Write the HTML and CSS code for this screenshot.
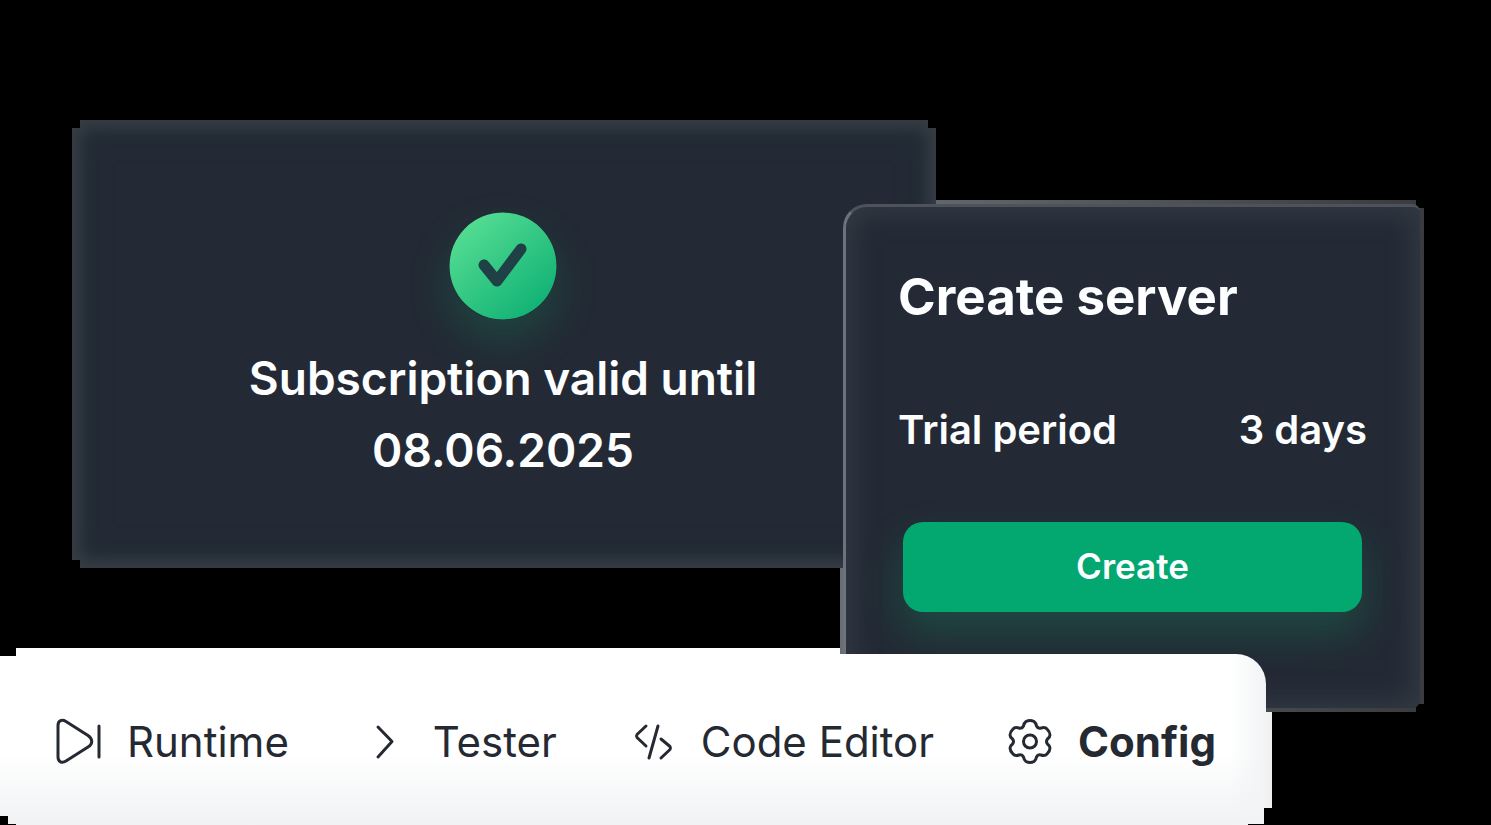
FILE: index.html
```
<!DOCTYPE html>
<html lang="en">
<head>
    <meta charset="UTF-8">
    <meta name="viewport" content="width=device-width, initial-scale=1.0">
    <title>Create server</title>
    <link rel="stylesheet" href="styles.css">
</head>
<body>
    <main class="collage">
        <section class="subscription">
            <svg class="check" viewBox="0 0 108 108" aria-hidden="true">
                <defs>
                    <linearGradient id="check-fill" x1="0.1" y1="0.1" x2="0.8" y2="0.9">
                        <stop offset="0" stop-color="#56de93"/>
                        <stop offset="1" stop-color="#13b376"/>
                    </linearGradient>
                </defs>
                <circle cx="54" cy="54" r="53.500" fill="url(#check-fill)"/>
                <path d="M35 53L48 69L72 37" fill="none" stroke="#1f4146" stroke-width="11" stroke-linecap="round" stroke-linejoin="round"/>
            </svg>
            <p>Subscription valid until<br>08.06.2025</p>
        </section>

        <section class="server">
            <h1>Create server</h1>
            <div class="trial">
                <span>Trial period</span>
                <span>3 days</span>
            </div>
            <button type="button" class="create-button">Create</button>
        </section>

        <nav class="tabs">
            <a href="#runtime">
                <svg class="icon" viewBox="0 0 48 48" aria-hidden="true">
                    <path d="M3 7.500C3 2.500 7 1 11 3.500L33 17.500C38 21 38 26 33 29L11 43C7 45.500 3 44 3 39Z"/>
                    <path d="M44 8V39"/>
                </svg>
                Runtime
            </a>
            <a href="#tester">
                <svg class="icon" viewBox="0 0 48 48" aria-hidden="true">
                    <path d="M17 9L31 23.500L17 39"/>
                </svg>
                Tester
            </a>
            <a href="#editor">
                <svg class="icon" viewBox="0 0 48 48" aria-hidden="true">
                    <path d="M17 8L8 16.500Q7 18 8 19.500L17 28"/>
                    <path d="M29 8L20 40"/>
                    <path d="M32 21L41 28.500Q42 30 41 31.500L32 40"/>
                </svg>
                Code Editor
            </a>
            <a href="#config" class="active">
                <svg class="icon" viewBox="0 0 48 48" aria-hidden="true">
                    <path d="M20 3.500Q24 1.500 28 3.500Q30 5 30.500 8Q32 11 35 10Q39 8.500 41 11Q44 14 44 17Q44 19 41.500 21Q39.500 23.500 41.500 26Q44 28 44 30Q44 33 41 36Q39 38.500 35 37Q32 36 30.500 39Q30 42 28 43.500Q24 45.500 20 43.500Q18 42 17.500 39Q16 36 13 37Q9 38.500 7 36Q4 33 4 30Q4 28 6.500 26Q8.500 23.500 6.500 21Q4 19 4 17Q4 14 7 11Q9 8.500 13 10Q16 11 17.500 8Q18 5 20 3.500Z"/>
                    <circle cx="24" cy="23.500" r="6.500"/>
                </svg>
                Config
            </a>
        </nav>
    </main>
</body>
</html>
```
FILE: styles.css
```
* {
    box-sizing: border-box;
}
body {
    margin: 0;
    background-color: #000;
    color: #fdfeff;
    font-family: Inter, "Liberation Sans", sans-serif;
}
h1, p {
    margin: 0;
}

/* the three panels share grid lines so that they can overlap */
.collage {
    display: grid;
    grid-template-columns: 72fr 771fr 93fr 330fr 154fr 71fr;
    grid-template-rows: 120px 84px 364px 86px 54px minmax(117px, 1fr);
    min-height: 100vh;
    isolation: isolate;
    overflow: hidden;
}

.subscription {
    grid-column: 2 / 4;
    grid-row: 2 / 4;
    position: relative;
    padding: 92px 2px 0 0;
    text-align: center;
    background-color: #232a35;
    box-shadow: inset 0 0 16px 8px #393e46, inset 0 0 24px 16px #222d36;
    clip-path: polygon(8px 0, calc(100% - 8px) 0, calc(100% - 8px) 8px, 100% 8px, 100% calc(100% - 8px), calc(100% - 8px) calc(100% - 8px), calc(100% - 8px) 100%, 8px 100%, 8px calc(100% - 8px), 0 calc(100% - 8px), 0 8px, 8px 8px);
}
.check {
    display: block;
    width: 108px;
    margin: 0 auto 22px;
    border-radius: 50%;
    box-shadow: 0 20px 40px rgba(16, 150, 100, 0.25);
}
.subscription p {
    font-size: 46px;
    font-weight: 600;
    line-height: 72px;
}

.server {
    grid-column: 3 / 6;
    grid-row: 3 / 6;
    position: relative;
    padding: 60px 53px 40px 52px;
    background-color: #232a35;
    border-left: 3px solid #6c737d;
    border-top: 3px solid #4d525b;
    border-radius: 24px 8px 8px 0;
    box-shadow: inset 0 0 24px 8px #323943;
}
.server::before {
    content: "";
    position: absolute;
    z-index: -1;
    inset: -7px -4px -4px -6px;
    background: linear-gradient(90deg, #6a6e74, #393b3f);
    clip-path: polygon(0 0, calc(100% - 8px) 0, calc(100% - 8px) 8px, 100% 8px, 100% calc(100% - 8px), calc(100% - 8px) calc(100% - 8px), calc(100% - 8px) 100%, 0 100%);
}
.server h1 {
    font-size: 51px;
    font-weight: 700;
    line-height: 60px;
}
.trial {
    display: flex;
    justify-content: space-between;
    margin: 79px 0 68px;
    font-size: 40px;
    font-weight: 600;
    line-height: 48px;
}
.create-button {
    display: block;
    width: calc(100% - 10px);
    height: 90px;
    margin: 0 5px;
    padding: 0 0 2px;
    border: none;
    border-radius: 20px;
    background-color: #02a870;
    color: #fdfeff;
    font-family: inherit;
    font-size: 35px;
    font-weight: 600;
    cursor: pointer;
    box-shadow: 0 20px 40px rgba(16, 150, 100, 0.3);
}

.tabs {
    grid-column: 1 / 5;
    grid-row: 5 / 7;
    position: relative;
    display: flex;
    justify-content: space-between;
    align-items: flex-start;
    padding: 64px 50px 0 55px;
    background: linear-gradient(270deg, #f1f3f5, rgba(255, 255, 255, 0) 36px), linear-gradient(#fff 100px, #f0f2f4 171px);
    border-top-right-radius: 30px;
    clip-path: polygon(16px -6px, 100% -6px, 100% 154px, calc(100% - 2px) 154px, calc(100% - 2px) 170px, calc(100% - 18px) 170px, calc(100% - 18px) 100%, 16px 100%, 16px 170px, 8px 170px, 8px 162px, 0 162px, 0 2px, 16px 2px);
}
/* pale edge showing behind the server panel */
.collage::before {
    content: "";
    grid-column: 1 / 5;
    grid-row: 5 / 7;
    z-index: -2;
    margin: -6px -6px 0 0;
    background-color: #fff;
    background-image: linear-gradient(270deg, #efefef, #fff 30px);
    clip-path: polygon(16px 0, 100% 0, 100% 160px, calc(100% - 8px) 160px, calc(100% - 8px) 176px, 16px 176px, 16px 8px);
}
.tabs a {
    display: flex;
    align-items: center;
    gap: 24px;
    color: #252a32;
    font-size: 42px;
    font-weight: 400;
    line-height: 48px;
    text-decoration: none;
}
.tabs .active {
    font-weight: 700;
}
.icon {
    width: 48px;
    height: 48px;
    fill: none;
    stroke: #252a32;
    stroke-width: 3;
    stroke-linecap: round;
    stroke-linejoin: round;
}
```
